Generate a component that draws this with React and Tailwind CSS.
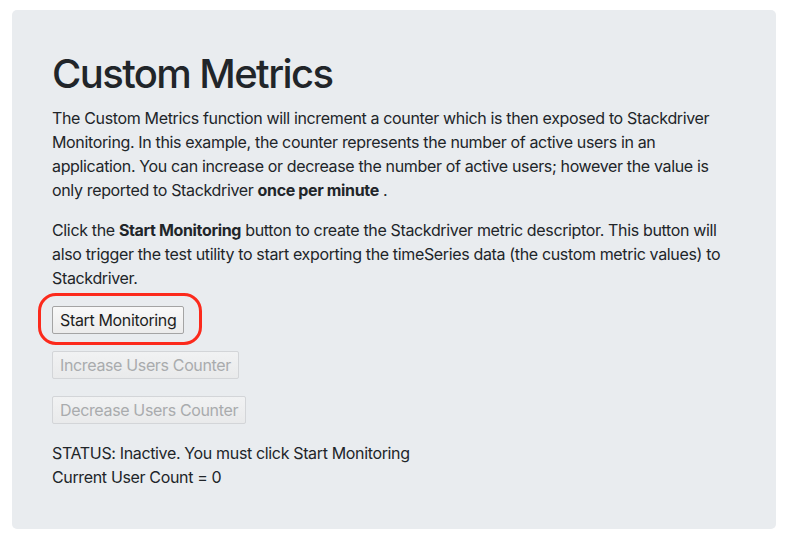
import React from 'react';

const font = { fontFamily: 'Inter, "Noto Sans", sans-serif' };

function Btn({ children, disabled }) {
  return (
    <button
      type="button"
      disabled={disabled}
      className={
        disabled
          ? 'h-[28px] px-[7px] border border-[#d3d5d8] bg-gradient-to-b from-[#f1f2f3] to-[#e9eaeb] text-[#a9abad] text-[16px] leading-none tracking-[-0.35px] rounded-[2px]'
          : 'h-[28px] px-[7px] border border-[#a4a4a4] bg-gradient-to-b from-[#f9f9f9] to-[#ececec] text-[#1e1e1e] text-[16px] leading-none tracking-[-0.35px] rounded-[2px]'
      }
    >
      {children}
    </button>
  );
}

export default function App() {
  return (
    <div className="min-h-screen bg-white pt-[10px] pl-[12px] pr-[14px]" style={font}>
      <div className="bg-[#e9ecef] rounded-[5px] p-[40px] text-[#212529] tracking-[-0.35px]">
        <h1 className="text-[40px] leading-[48px] font-medium mb-[8px] tracking-[-1.6px]">Custom Metrics</h1>
        <p className="text-[16px] leading-[24px] mb-[16px] whitespace-nowrap">
          <span className="block">The Custom Metrics function will increment a counter which is then exposed to Stackdriver</span>
          <span className="block">Monitoring. In this example, the counter represents the number of active users in an</span>
          <span className="block">application. You can increase or decrease the number of active users; however the value is</span>
          <span className="block">only reported to Stackdriver <b className="font-bold">once per minute</b> .</span>
        </p>
        <p className="text-[16px] leading-[24px] mb-[16px] whitespace-nowrap">
          <span className="block">Click the <b className="font-bold">Start Monitoring</b> button to create the Stackdriver metric descriptor. This button will</span>
          <span className="block">also trigger the test utility to start exporting the timeSeries data (the custom metric values) to</span>
          <span className="block">Stackdriver.</span>
        </p>
        <div className="flex flex-col items-start gap-[17px]">
          <div className="relative">
            <Btn>Start Monitoring</Btn>
            <div className="absolute left-[-14px] top-[-13px] w-[164px] h-[52px] border-[3px] border-[#fc2a1c] rounded-[18px] pointer-events-none" />
          </div>
          <Btn disabled>Increase Users Counter</Btn>
          <Btn disabled>Decrease Users Counter</Btn>
        </div>
        <div className="mt-[17px] text-[16px] leading-[24px]">
          <div>STATUS: Inactive. You must click Start Monitoring</div>
          <div>Current User Count = 0</div>
        </div>
      </div>
    </div>
  );
}
